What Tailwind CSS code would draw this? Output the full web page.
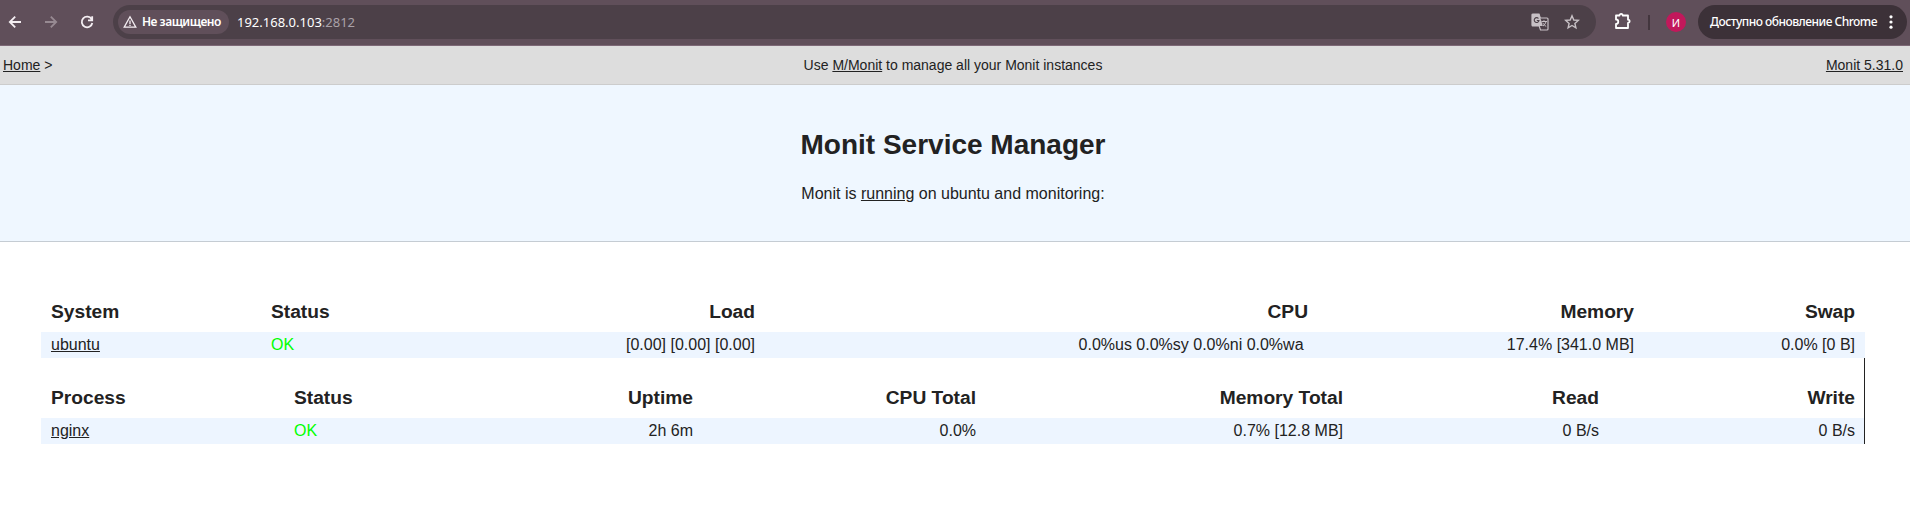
<!DOCTYPE html>
<html lang="ru">
<head>
<meta charset="utf-8">
<title>Monit Service Manager</title>
<script src="https://cdn.jsdelivr.net/npm/@tailwindcss/browser@4"></script>
</head>
<body class="h-[530px] overflow-hidden bg-white font-['Liberation_Sans',Arial,sans-serif] text-base text-[#222222]">

<!-- Browser toolbar -->
<header class="flex h-[46px] items-center border-b border-[#7d6876] bg-[#604f5a] pl-[5px] pr-[3px] font-['Noto_Sans','Open_Sans',sans-serif] text-white">
  <svg class="mt-[-1px] size-5 shrink-0" viewBox="0 0 20 20" fill="none" stroke="#f4eef2" stroke-width="1.8"><path d="M16 10H5M10.2 4.6 4.8 10l5.4 5.4"/></svg>
  <svg class="mt-[-1px] ml-4 size-5 shrink-0" viewBox="0 0 20 20" fill="none" stroke="#978a92" stroke-width="1.8"><path d="M4 10h11M9.8 4.6l5.4 5.4-5.4 5.4"/></svg>
  <svg class="mt-[-1px] ml-4 size-5 shrink-0" viewBox="0 0 20 20" fill="none" stroke="#f4eef2" stroke-width="1.8"><path d="M14.6 7.2A5.3 5.3 0 1 0 15.3 11M15.2 4.2v4.2H11"/></svg>

  <div class="mt-[-1px] ml-4 flex h-[34px] w-[1483px] shrink-0 items-center rounded-full bg-[#4c4048] pl-[5px] pr-[16px]">
    <div class="flex h-6 w-[111px] shrink-0 items-center rounded-full bg-[#604f5a] pl-[5px]">
      <svg class="h-[14px] w-[14px] shrink-0" viewBox="0 0 14 14" fill="none" stroke="#f4eef2" stroke-width="1.3"><path d="M7 1.8 1.200 12.200h11.600zM7 5.500v3.400M7 9.800v1.200"/></svg>
      <span class="ml-[5px] text-[12px] leading-5 font-semibold tracking-[-0.5px] whitespace-nowrap">Не защищено</span>
    </div>
    <span class="ml-[8px] text-[13px] leading-5 whitespace-nowrap">192.168.0.103<span class="text-[#aaa2a8]">:2812</span></span>
    <svg class="ml-auto h-[18px] w-[18px]" viewBox="0 0 18 18"><path d="M2 1h6l1.300 4H16a1 1 0 0 1 1 1v10a1 1 0 0 1-1 1H9.500L8.200 13H2a1 1 0 0 1-1-1V2a1 1 0 0 1 1-1z" fill="none" stroke="#c7c0c5" stroke-width="1.200"/><path d="M1 1h7.200l3.600 12H1z" fill="#c7c0c5"/><path d="M7.500 5.500A2.400 2.400 0 1 0 8 7.500H5.800" fill="none" stroke="#4c4048" stroke-width="1.100"/><path d="M10.500 8.500h5.500M13 7.200v1.300M15 8.500c-.5 2-1.500 3.500-3 4.500M11.800 9.800c.7 1.400 1.700 2.500 3.400 3.600" fill="none" stroke="#c7c0c5"/></svg>
    <svg class="ml-[15px] h-[16px] w-[16px]" viewBox="0 0 16 16" fill="none" stroke="#c7c0c5" stroke-width="1.400"><path d="m8 1.800 1.800 4.200 4.500.4-3.400 3 1 4.400L8 11.500l-3.900 2.300 1-4.400-3.400-3 4.500-.4z"/></svg>
  </div>

  <svg class="mt-[-3px] ml-[18px] h-[18px] w-[18px] shrink-0" viewBox="0 0 18 18" fill="none" stroke="#ffffff" stroke-width="1.800" stroke-linejoin="round"><path d="M2 3.500h3.500a1.600 1.600 0 0 1 3.200 0H14v4.200a1.600 1.600 0 0 1 0 3.200V16H2v-4a2.200 2.200 0 0 0 0-4.500z"/></svg>
  <div class="mt-[-1px] ml-[16px] h-[15px] w-0.5 shrink-0 bg-[#43363e]"></div>
  <div class="mt-[-1px] ml-4 flex size-5 shrink-0 items-center justify-center rounded-full bg-[#c2185b] text-[11px] leading-none">И</div>
  <div class="mt-[-1px] ml-3 flex h-[34px] w-[209px] shrink-0 items-center rounded-full bg-[#3c3138] pl-3">
    <span class="w-[170px] text-[12px] leading-5 font-medium tracking-[-0.5px] whitespace-nowrap">Доступно обновление Chrome</span>
    <svg class="ml-[9px] h-4 w-1" viewBox="0 0 4 16" fill="#ffffff"><circle cx="2" cy="2.800" r="1.600"/><circle cx="2" cy="8" r="1.600"/><circle cx="2" cy="13.200" r="1.600"/></svg>
  </div>
</header>

<nav class="grid h-[39px] grid-cols-3 items-center border-b border-[#cccccc] bg-[#dddddd] pr-[7px] pl-[3px] text-sm">
  <div><a class="underline" href="#">Home</a> &gt;</div>
  <div class="text-center">Use <a class="underline" href="#">M/Monit</a> to manage all your Monit instances</div>
  <div class="text-right"><a class="underline" href="#">Monit 5.31.0</a></div>
</nav>

<section class="flex h-[157px] flex-col items-center border-b border-[#c5ccd3] bg-[#eff7ff] pt-11 pr-1">
  <h1 class="text-[28px] leading-8 font-bold">Monit Service Manager</h1>
  <p class="mt-[21px] leading-6">Monit is <a class="underline" href="#">running</a> on ubuntu and monitoring:</p>
</section>

<main class="ml-[41px] w-[1824px] pt-[49px]">
  <table class="w-full table-fixed border-collapse">
    <colgroup><col class="w-[220px]"><col class="w-[220px]"><col class="w-[284px]"><col class="w-[553px]"><col class="w-[326px]"><col class="w-[221px]"></colgroup>
    <thead>
      <tr class="h-[41px] text-right text-[19.2px] leading-6">
        <th class="px-2.5 py-0 text-left">System</th><th class="px-2.5 py-0 text-left">Status</th><th class="px-2.5 py-0">Load</th><th class="px-2.5 py-0">CPU</th><th class="px-2.5 py-0">Memory</th><th class="px-2.5 py-0">Swap</th>
      </tr>
    </thead>
    <tbody>
      <tr class="h-[26px] bg-[#edf5ff] text-right">
        <td class="px-2.5 py-0 text-left"><a class="underline" href="#">ubuntu</a></td><td class="px-2.5 py-0 text-left text-[#00ff00]">OK</td><td class="px-2.5 py-0">[0.00] [0.00] [0.00]</td><td class="px-2.5 py-0">0.0%us 0.0%sy 0.0%ni 0.0%wa&nbsp;</td><td class="px-2.5 py-0">17.4% [341.0 MB]</td><td class="px-2.5 py-0">0.0% [0 B]</td>
      </tr>
    </tbody>
  </table>
  <div class="border-r border-[#222222] pt-[19px]">
    <table class="w-full table-fixed border-separate border-spacing-0">
      <colgroup><col class="w-[243px]"><col class="w-[200px]"><col class="w-[219px]"><col class="w-[283px]"><col class="w-[367px]"><col class="w-[256px]"><col class="w-[255px]"></colgroup>
      <thead>
        <tr class="h-[41px] text-right text-[19.2px] leading-6">
          <th class="px-2.5 py-0 text-left">Process</th><th class="px-2.5 py-0 text-left">Status</th><th class="px-2.5 py-0">Uptime</th><th class="px-2.5 py-0">CPU Total</th><th class="px-2.5 py-0">Memory Total</th><th class="px-2.5 py-0">Read</th><th class="py-0 pr-[9px]">Write</th>
        </tr>
      </thead>
      <tbody>
        <tr class="h-[26px] bg-[#edf5ff] text-right">
          <td class="px-2.5 py-0 text-left"><a class="underline" href="#">nginx</a></td><td class="px-2.5 py-0 text-left text-[#00ff00]">OK</td><td class="px-2.5 py-0">2h 6m</td><td class="px-2.5 py-0">0.0%</td><td class="px-2.5 py-0">0.7% [12.8 MB]</td><td class="px-2.5 py-0">0 B/s</td><td class="py-0 pr-[9px]">0 B/s</td>
        </tr>
      </tbody>
    </table>
  </div>
</main>
</body>
</html>
